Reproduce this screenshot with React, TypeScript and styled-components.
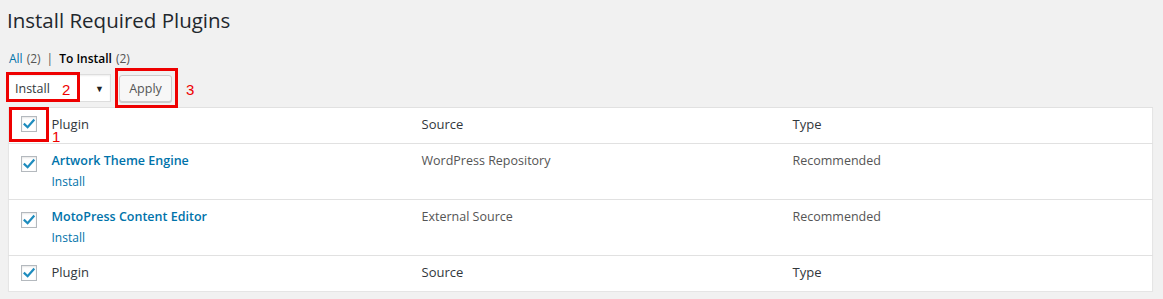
import styled, { createGlobalStyle } from "styled-components";

const Global = createGlobalStyle`
  html, body {
    margin: 0;
    background: #f1f1f1;
    font-family: "Open Sans", "Noto Sans", sans-serif;
    font-size: 12px;
    color: #444;
  }
`;

const Wrap = styled.div`
  padding: 0 10px 0 8px;
`;

const Title = styled.h1`
  margin: 0;
  padding: 6px 0 0 0;
  font-weight: 400;
  font-size: 20.5px;
  line-height: 29px;
  color: #23282d;
  margin-left: -1px;
`;

const Filters = styled.ul`
  list-style: none;
  margin: 15px 0 0 1px;
  padding: 0;
  display: flex;
  align-items: center;
  font-size: 12px;
  line-height: 18px;
  color: #666;
`;

const FilterLink = styled.a<{ $current?: boolean }>`
  color: ${(p) => (p.$current ? "#000" : "#0073aa")};
  font-weight: ${(p) => (p.$current ? 600 : 400)};
  text-decoration: none;
`;

const Count = styled.span`
  color: #555;
  margin-left: 4px;
`;

const Sep = styled.span`
  margin: 0 6px;
  color: #555;
`;

const Bar = styled.div`
  display: flex;
  align-items: center;
  margin-top: 4px;
  height: 32px;
`;

const Marked = styled.div`
  position: relative;
  display: inline-flex;
`;

const Mark = styled.span<{ $top: number; $left: number; $w: number; $h: number }>`
  position: absolute;
  top: ${(p) => p.$top}px;
  left: ${(p) => p.$left}px;
  width: ${(p) => p.$w}px;
  height: ${(p) => p.$h}px;
  border: 3px solid #ee0000;
  box-sizing: border-box;
  pointer-events: none;
`;

const Num = styled.span<{ $top: number; $left: number }>`
  position: absolute;
  top: ${(p) => p.$top}px;
  left: ${(p) => p.$left}px;
  color: #e00;
  font-family: "Liberation Sans", Arial, sans-serif;
  font-size: 15px;
  line-height: 15px;
`;

const Select = styled.div`
  width: 103px;
  height: 28px;
  box-sizing: border-box;
  background: #fff;
  border: 1px solid #ddd;
  box-shadow: inset 0 1px 2px rgba(0, 0, 0, 0.07);
  display: flex;
  align-items: center;
  justify-content: space-between;
  padding: 0 6px 0 6px;
  color: #32373c;
  font-size: 12.5px;
`;

const Arrow = styled.span`
  font-size: 9px;
  color: #222;
`;

const Button = styled.button`
  margin-left: 8px;
  height: 27px;
  width: 53px;
  padding: 0;
  font-family: inherit;
  font-size: 12.5px;
  color: #555;
  background: #f7f7f7;
  border: 1px solid #ccc;
  border-radius: 3px;
  box-shadow: 0 1px 0 #ccc;
`;

const Table = styled.table`
  width: 100%;
  margin-top: 3px;
  border-collapse: collapse;
  background: #fff;
  border: 1px solid #e5e5e5;
  box-shadow: 0 1px 1px rgba(0, 0, 0, 0.04);
  table-layout: fixed;
`;

const Row = styled.tr<{ $h: number }>`
  height: ${(p) => p.$h}px;
  border-top: 1px solid #e1e1e1;
`;

const HeadCell = styled.th<{ $w?: number }>`
  ${(p) => (p.$w ? `width: ${p.$w}px;` : "")}
  box-sizing: border-box;
  text-align: left;
  font-weight: 400;
  font-size: 13px;
  color: #32373c;
  padding: 0 10px 3px;
  vertical-align: middle;
`;

const CheckCell = styled.td<{ $head?: boolean }>`
  width: 33px;
  padding: ${(p) => (p.$head ? "0 0 2px 12px" : "10px 0 0 12px")};
  vertical-align: ${(p) => (p.$head ? "middle" : "top")};
  box-sizing: border-box;
`;

const Cell = styled.td`
  padding: 9px 10px 0;
  vertical-align: top;
  color: #555;
  font-size: 12.5px;
  line-height: 16px;
`;

const Name = styled.a`
  display: block;
  color: #0073aa;
  font-weight: 600;
  font-size: 12.5px;
  text-decoration: none;
`;

const Action = styled.a`
  display: block;
  margin-top: 5px;
  color: #0073aa;
  font-size: 12px;
  text-decoration: none;
`;

const Box = styled.span`
  display: inline-flex;
  align-items: center;
  justify-content: center;
  width: 16px;
  height: 16px;
  box-sizing: border-box;
  border: 1px solid #b4b9be;
  background: #fff;
  box-shadow: inset 0 1px 2px rgba(0, 0, 0, 0.1);
  vertical-align: middle;
`;

const Check = () => (
  <Box>
    <svg width="12" height="12" viewBox="0 0 12 12">
      <path d="M1.6 6.4 L4.6 9.2 L10.6 2.4" fill="none" stroke="#1e8cbe" strokeWidth="2.2" strokeLinecap="square" />
    </svg>
  </Box>
);

const plugins = [
  { name: "Artwork Theme Engine", source: "WordPress Repository", type: "Recommended" },
  { name: "MotoPress Content Editor", source: "External Source", type: "Recommended" },
];

const HeadRow = ({ mark }: { mark?: boolean }) => (
  <Row $h={36}>
    <CheckCell $head>
      {mark ? (
        <Marked>
          <Check />
          <Mark $top={-9} $left={-12} $w={40} $h={35} />
          <Num $top={13} $left={31}>1</Num>
        </Marked>
      ) : (
        <Check />
      )}
    </CheckCell>
    <HeadCell $w={370}>Plugin</HeadCell>
    <HeadCell $w={371}>Source</HeadCell>
    <HeadCell>Type</HeadCell>
  </Row>
);

export default function App() {
  return (
    <Wrap>
      <Global />
      <Title>Install Required Plugins</Title>
      <Filters>
        <li>
          <FilterLink>All</FilterLink>
          <Count>(2)</Count>
          <Sep>|</Sep>
        </li>
        <li>
          <FilterLink $current>To Install</FilterLink>
          <Count>(2)</Count>
        </li>
      </Filters>
      <Bar>
        <Marked>
          <Select>
            <span>Install</span>
            <Arrow>▼</Arrow>
          </Select>
          <Mark $top={-2} $left={-2} $w={74} $h={30} />
          <Num $top={8} $left={54}>2</Num>
        </Marked>
        <Marked>
          <Button>Apply</Button>
          <Mark $top={-7} $left={4} $w={63} $h={40} />
          <Num $top={7} $left={75}>3</Num>
        </Marked>
      </Bar>
      <Table>
        <thead>
          <HeadRow mark />
        </thead>
        <tbody>
          {plugins.map((p) => (
            <Row $h={56} key={p.name}>
              <CheckCell>
                <Check />
              </CheckCell>
              <Cell>
                <Name>{p.name}</Name>
                <Action>Install</Action>
              </Cell>
              <Cell>{p.source}</Cell>
              <Cell>{p.type}</Cell>
            </Row>
          ))}
        </tbody>
        <tfoot>
          <HeadRow />
        </tfoot>
      </Table>
    </Wrap>
  );
}
